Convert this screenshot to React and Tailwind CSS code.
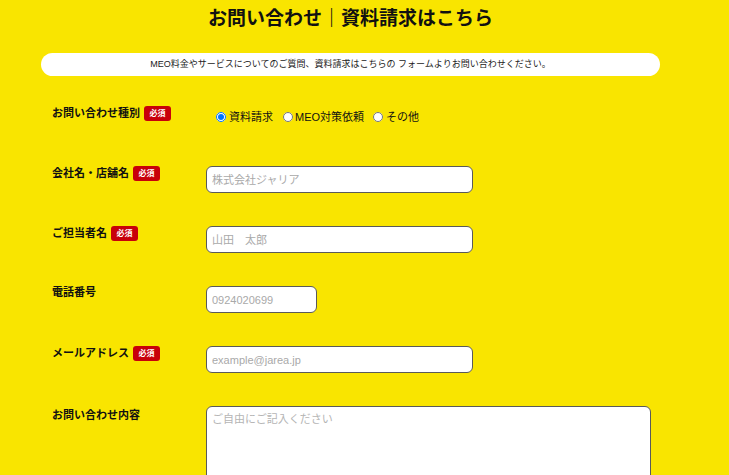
export default function App() {
  const font = { fontFamily: '"Liberation Sans", "Noto Sans CJK JP", sans-serif' };
  const Badge = () => (
    <span className="inline-flex items-center justify-center w-[27px] h-[15px] rounded-[3px] bg-[#c8000a] text-white text-[8px] font-bold leading-none">
      必須
    </span>
  );
  const inputCls =
    "h-[27px] rounded-[6px] border border-[#5a5a5a] bg-white px-[5px] text-[11px] text-[#333] placeholder:text-[#a9a9a9] outline-none";
  return (
    <div className="w-full min-h-[475px] bg-[#f9e500] overflow-hidden text-[#111]" style={font}>
      <h1
        className="w-[701px] text-center text-[19px] font-bold leading-[26px] pt-[4px]"
        style={{ fontFamily: '"Noto Sans CJK JP", sans-serif' }}
      >
        お問い合わせ｜資料請求はこちら
      </h1>
      <div className="ml-[41px] mt-[23px] w-[619px] h-[23px] rounded-full bg-white flex items-center justify-center text-[9px] text-[#222] leading-none">
        MEO料金やサービスについてのご質問、資料請求はこちらの フォームよりお問い合わせください。
      </div>
      <form className="pl-[52px] pt-[30px] flex flex-col">
        <div className="flex items-start h-[60px]">
          <div className="w-[154px] flex items-center gap-[4px] h-[15px]">
            <span className="text-[11px] font-bold leading-[15px]">お問い合わせ種別</span>
            <Badge />
          </div>
          <div className="flex items-center mt-[4px] ml-[10px] text-[11px] leading-[14px]">
            <label className="flex items-center">
              <input type="radio" name="kind" defaultChecked className="m-0 w-[10px] h-[10px]" />
              <span className="ml-[3px]">資料請求</span>
            </label>
            <label className="flex items-center ml-[10px]">
              <input type="radio" name="kind" className="m-0 w-[10px] h-[10px]" />
              <span className="ml-[2px]">MEO対策依頼</span>
            </label>
            <label className="flex items-center ml-[9px]">
              <input type="radio" name="kind" className="m-0 w-[10px] h-[10px]" />
              <span className="ml-[3px]">その他</span>
            </label>
          </div>
        </div>
        <div className="flex items-start h-[60px]">
          <div className="w-[154px] flex items-center gap-[4px] h-[15px]">
            <span className="text-[11px] font-bold leading-[15px]">会社名・店舗名</span>
            <Badge />
          </div>
          <input className={inputCls + " w-[267px]"} placeholder="株式会社ジャリア" />
        </div>
        <div className="flex items-start h-[60px]">
          <div className="w-[154px] flex items-center gap-[4px] h-[15px]">
            <span className="text-[11px] font-bold leading-[15px]">ご担当者名</span>
            <Badge />
          </div>
          <input className={inputCls + " w-[267px]"} placeholder="山田　太郎" />
        </div>
        <div className="flex items-start h-[60px]">
          <div className="w-[154px] flex items-center gap-[4px] h-[15px] mt-[-1px]">
            <span className="text-[11px] font-bold leading-[15px]">電話番号</span>
          </div>
          <input className={inputCls + " w-[111px]"} placeholder="0924020699" />
        </div>
        <div className="flex items-start h-[60px]">
          <div className="w-[154px] flex items-center gap-[4px] h-[15px]">
            <span className="text-[11px] font-bold leading-[15px]">メールアドレス</span>
            <Badge />
          </div>
          <input className={inputCls + " w-[267px]"} placeholder="example@jarea.jp" />
        </div>
        <div className="flex items-start">
          <div className="w-[154px] flex items-center h-[15px] mt-[2px]">
            <span className="text-[11px] font-bold leading-[15px]">お問い合わせ内容</span>
          </div>
          <textarea
            className="w-[445px] h-[150px] rounded-[6px] border border-[#5a5a5a] bg-white px-[5px] py-[4px] text-[11px] leading-[16px] placeholder:text-[#b5b5b5] outline-none resize-none"
            placeholder="ご自由にご記入ください"
          />
        </div>
      </form>
    </div>
  );
}
